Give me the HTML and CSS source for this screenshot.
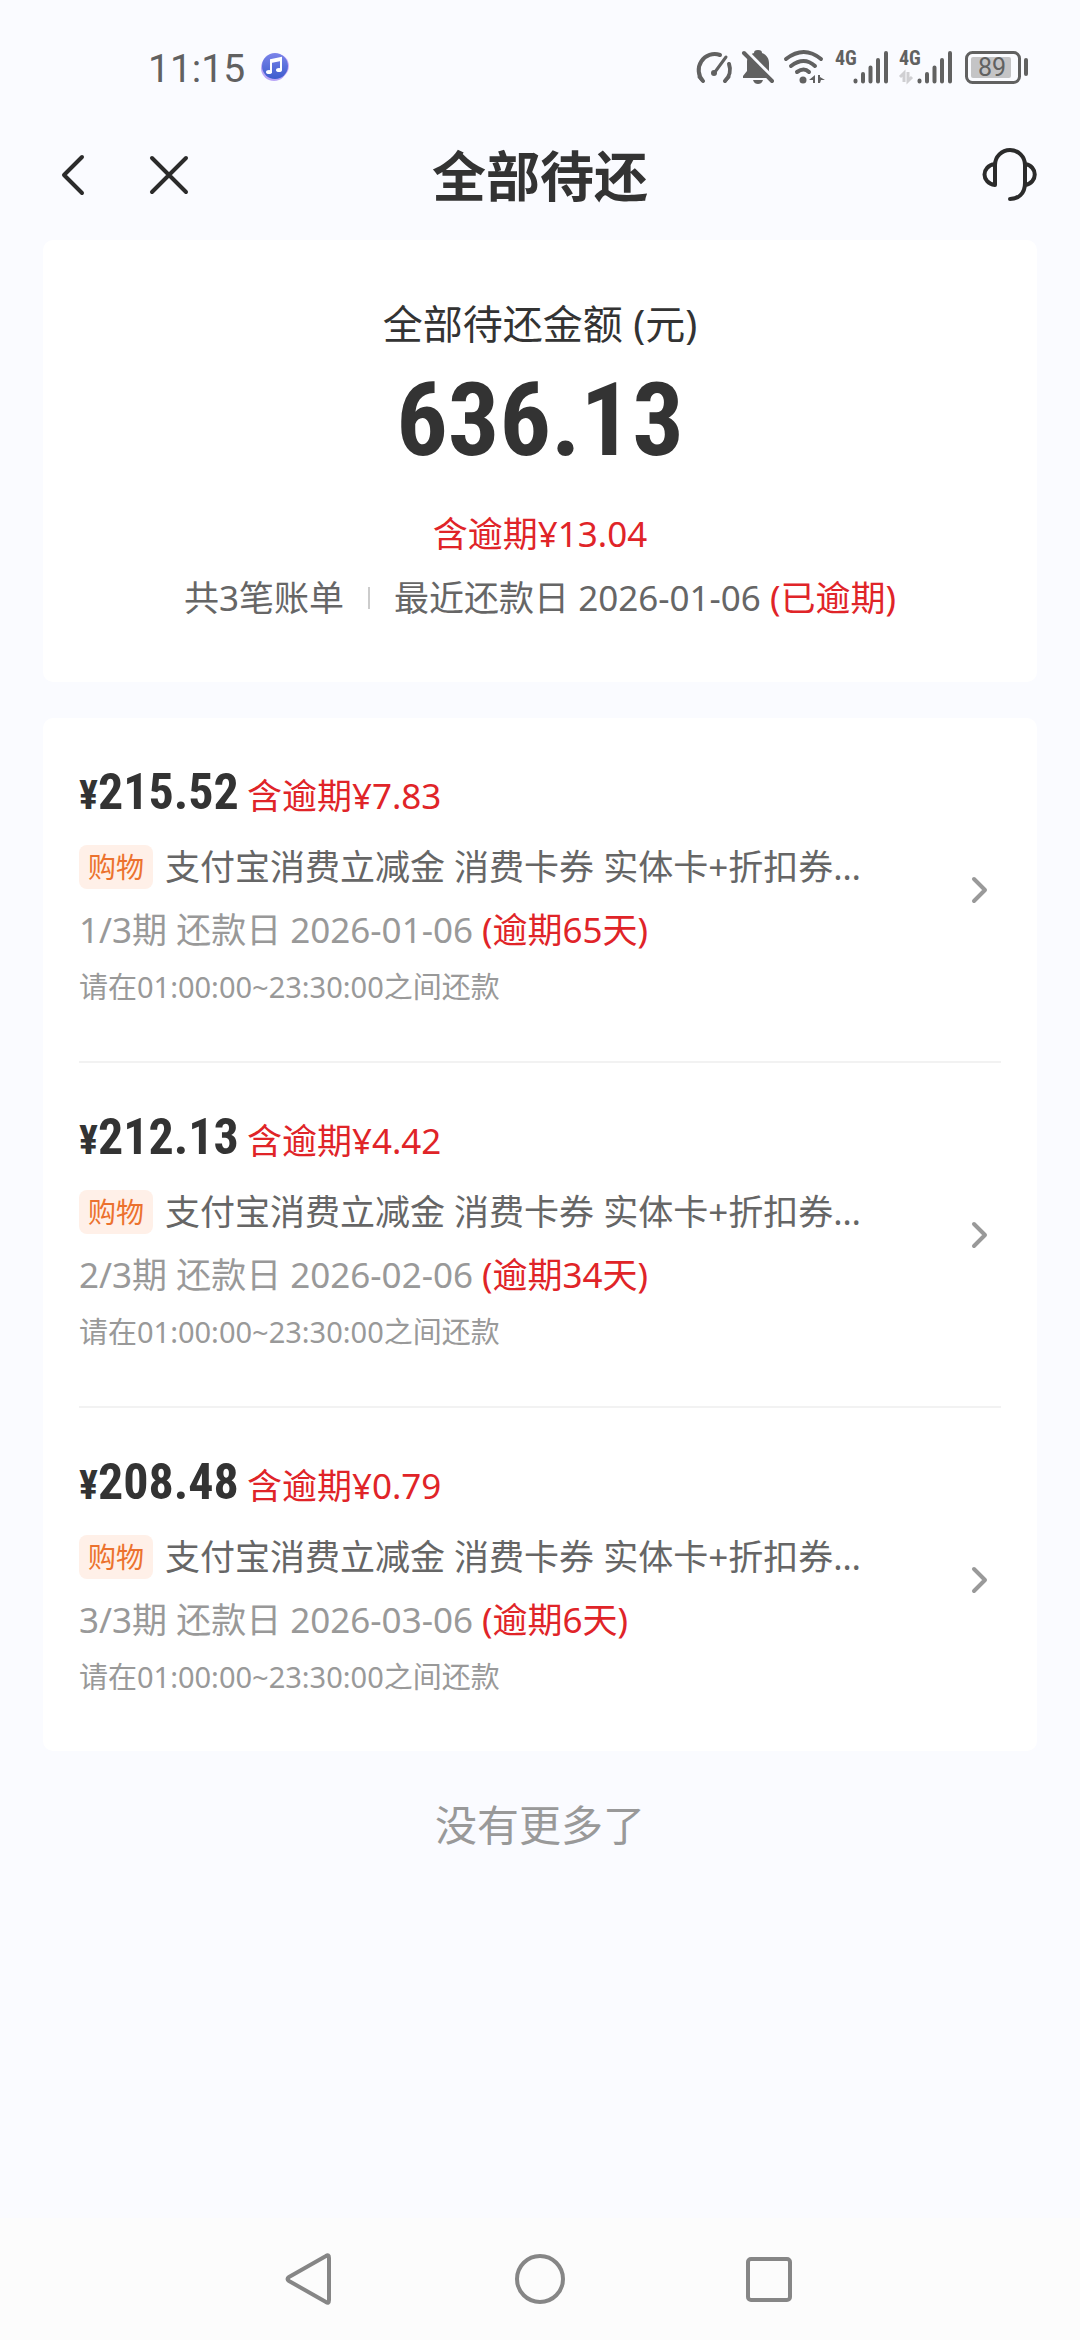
FILE: index.html
```html
<!DOCTYPE html>
<html lang="zh-CN">
<head>
<meta charset="utf-8">
<meta name="viewport" content="width=device-width, initial-scale=1">
<title>全部待还</title>
<link rel="stylesheet" href="styles.css">
</head>
<body>
<div class="status-bar">
  <span class="clock">11:15</span>
  <svg class="music" width="30" height="30" viewBox="0 0 30 30" aria-hidden="true">
    <defs><linearGradient id="note" x1="0" y1="0" x2="0" y2="1"><stop offset="0" stop-color="#7b84ea"/><stop offset="1" stop-color="#3d5ccd"/></linearGradient></defs>
    <circle cx="14" cy="16" r="13" fill="#b9a5f7"/><circle cx="17" cy="14" r="12" fill="#d0b0f8"/>
    <circle cx="15" cy="14" r="13" fill="url(#note)"/>
    <path d="M11 21V8l10-2v12" fill="none" stroke="#fff" stroke-width="2"/><path d="M11 8l10-2v3l-10 2z" fill="#fff"/>
    <ellipse cx="9" cy="20" rx="3" ry="2" fill="#fff"/><ellipse cx="19" cy="18" rx="3" ry="2" fill="#fff"/>
  </svg>
  <div class="status-icons">
    <svg width="36" height="34" viewBox="0 0 36 34" fill="none" stroke="#616161" stroke-width="4" stroke-linecap="round" aria-hidden="true">
      <path d="M7 31A16 16 0 0 1 24 5"/><path d="M3 27l4 4M29 31l4-4" stroke-width="3"/><path d="M33 14A16 16 0 0 1 29 31"/>
      <path d="M30 7L19 22" stroke-width="3"/><circle cx="18" cy="23" r="3" fill="#616161" stroke="none"/>
    </svg>
    <svg width="32" height="34" viewBox="0 0 32 34" aria-hidden="true">
      <path d="M16 0c3 0 4 1 4 3 5 2 7 6 7 10v8l2 5v2H1v-2l4-5v-9c0-5 3-8 7-9 0-2 1-3 4-3z" fill="#616161"/>
      <path d="M11 30h10c-1 3-3 4-5 4s-4-1-5-4z" fill="#616161"/>
      <path d="M2 -1L33 30" stroke="#fafbff" stroke-width="4"/>
      <path d="M2 3l28 28" stroke="#616161" stroke-width="4" stroke-linecap="round"/>
    </svg>
    <svg width="41" height="34" viewBox="0 0 41 34" fill="none" stroke="#616161" stroke-width="4" stroke-linecap="round" aria-hidden="true">
      <path d="M2 9Q20 -5 37 9M7 16Q20 6 31 16M13 22Q20 17 25 22"/><circle cx="19" cy="30" r="3.500" fill="#616161" stroke="none"/>
      <path d="M31 25v8h-2v-3h-4zM34 25h2v2l5 3h-4l-1 3h-2z" fill="#616161" stroke="none"/>
    </svg>
    <svg class="signal" width="54" height="34" viewBox="0 0 54 34" aria-hidden="true">
      <text x="0" y="15" class="net">4G</text>
      <path d="M20.500 30.500v1M28 24v7.500M35.500 17.500v14M43 10v21.500M51 3v28.500" stroke="#616161" stroke-width="4" stroke-linecap="round"/>
    </svg>
    <svg class="signal" width="54" height="34" viewBox="0 0 54 34" aria-hidden="true">
      <text x="0" y="15" class="net">4G</text>
      <path d="M1 27l4-4v9M9 22v9l4-4" fill="none" stroke="#cfcfd2" stroke-width="3"/>
      <path d="M20.500 30.500v1M28 24v7.500M35.500 17.500v14M43 10v21.500M51 3v28.500" stroke="#616161" stroke-width="4" stroke-linecap="round"/>
    </svg>
    <svg class="battery" width="64" height="34" viewBox="0 0 64 34" aria-hidden="true">
      <rect x="1.500" y="2.500" width="53" height="30" rx="6" fill="none" stroke="#616161" stroke-width="3"/>
      <rect x="6" y="7" width="40" height="21" rx="2" fill="#c4c4c6"/><rect x="59" y="8" width="4" height="18" rx="2" fill="#616161"/>
      <text x="27" y="26" class="charge">89</text>
    </svg>
  </div>
</div>
<header class="header">
  <div class="header-left">
    <button class="icon-button" aria-label="返回"><svg width="26" height="42" viewBox="0 0 26 42"><path d="M23 2L5 20l18 18"/></svg></button>
    <button class="icon-button" aria-label="关闭"><svg width="38" height="38" viewBox="0 0 38 38"><path d="M2 1l34 34M36 1L2 35"/></svg></button>
  </div>
  <h1 class="title">全部待还</h1>
  <button class="icon-button service" aria-label="客服"><svg width="56" height="56" viewBox="0 0 56 56"><path d="M14 37V17a15 15 0 0 1 30 0v18c0 11-7 16-15 16M14 16c-14 2-14 19 0 21M44 16c13 2 13 19 0 21"/></svg></button>
</header>
<main class="content">
  <section class="card summary">
    <h2 class="summary-label">全部待还金额 (元)</h2>
    <p class="total">636.13</p>
    <p class="summary-line overdue">含逾期¥13.04</p>
    <p class="summary-line"><span>共3笔账单</span><span class="separator"></span><span>最近还款日 2026-01-06 <span class="overdue">(已逾期)</span></span></p>
  </section>
  <section class="card bills">
    <a class="bill" href="#bill-1">
      <div class="bill-main">
        <p class="amount"><span class="price"><span class="yen">¥</span>215.52</span><span class="overdue">含逾期¥7.83</span></p>
        <p class="goods"><span class="tag">购物</span><span class="name">支付宝消费立减金 消费卡券 实体卡+折扣券…</span></p>
        <p class="due">1/3期 还款日 2026-01-06 <span class="overdue">(逾期65天)</span></p>
        <p class="hint">请在01:00:00~23:30:00之间还款</p>
      </div>
      <svg class="chevron" width="18" height="28" viewBox="0 0 18 28"><path d="M3 3l11 11L3 25"/></svg>
    </a>
    <a class="bill" href="#bill-2">
      <div class="bill-main">
        <p class="amount"><span class="price"><span class="yen">¥</span>212.13</span><span class="overdue">含逾期¥4.42</span></p>
        <p class="goods"><span class="tag">购物</span><span class="name">支付宝消费立减金 消费卡券 实体卡+折扣券…</span></p>
        <p class="due">2/3期 还款日 2026-02-06 <span class="overdue">(逾期34天)</span></p>
        <p class="hint">请在01:00:00~23:30:00之间还款</p>
      </div>
      <svg class="chevron" width="18" height="28" viewBox="0 0 18 28"><path d="M3 3l11 11L3 25"/></svg>
    </a>
    <a class="bill" href="#bill-3">
      <div class="bill-main">
        <p class="amount"><span class="price"><span class="yen">¥</span>208.48</span><span class="overdue">含逾期¥0.79</span></p>
        <p class="goods"><span class="tag">购物</span><span class="name">支付宝消费立减金 消费卡券 实体卡+折扣券…</span></p>
        <p class="due">3/3期 还款日 2026-03-06 <span class="overdue">(逾期6天)</span></p>
        <p class="hint">请在01:00:00~23:30:00之间还款</p>
      </div>
      <svg class="chevron" width="18" height="28" viewBox="0 0 18 28"><path d="M3 3l11 11L3 25"/></svg>
    </a>
  </section>
  <p class="end">没有更多了</p>
</main>
<nav class="system-nav">
  <button class="icon-button" aria-label="后退"><svg width="52" height="52" viewBox="0 0 52 52"><path d="M41 3q3-2 3 2v42q0 4-3 2L4 28q-3-2 0-4z"/></svg></button>
  <button class="icon-button" aria-label="主屏幕"><svg width="52" height="52" viewBox="0 0 52 52"><circle cx="26" cy="26" r="23"/></svg></button>
  <button class="icon-button" aria-label="最近任务"><svg width="52" height="52" viewBox="0 0 52 52"><rect x="5" y="6" width="42" height="41" rx="3"/></svg></button>
</nav>
</body>
</html>
```
FILE: styles.css
```css
* { box-sizing: border-box; }
body {
  margin: 0;
  min-height: 100vh;
  display: flex;
  flex-direction: column;
  background: #fafbff;
  color: #333;
  font-family: "Noto Sans", "Noto Sans CJK SC", sans-serif;
  font-size: 35px;
}
h1, h2, p { margin: 0; font-weight: 400; }
svg { display: block; flex: none; overflow: visible; }
.status-bar {
  display: flex;
  align-items: center;
  gap: 15px;
  height: 112px;
  padding: 22px 51px 0 148px;
  color: #616161;
}
.clock { padding-top: 4px; font: 39px/40px Roboto, sans-serif; }
.status-icons { display: flex; align-items: center; gap: 10px; margin-left: auto; }
.battery { margin-left: 2px; }
.net { font: 700 20px "Roboto Condensed", Roboto, sans-serif; fill: #616161; }
.charge { font: 25px Roboto, sans-serif; fill: #616161; text-anchor: middle; }
.header {
  display: grid;
  grid-template-columns: 1fr auto 1fr;
  align-items: center;
  height: 128px;
  padding: 0 43px;
}
.header-left { display: flex; align-items: center; gap: 65px; padding-left: 16px; }
.icon-button {
  padding: 0;
  border: 0;
  background: none;
  fill: none;
  stroke: #2b2b2b;
  stroke-width: 4px;
  stroke-linecap: round;
  stroke-linejoin: round;
}
.service { justify-self: end; }
.title { font-size: 54px; line-height: 72px; font-weight: 700; }
.content { padding: 0 43px; }
.card { background: #fff; border-radius: 10px; }
.summary {
  display: flex;
  flex-direction: column;
  align-items: center;
  padding: 56px 36px 52px;
}
.summary-label { font-size: 40px; line-height: 56px; }
.total, .price { font-family: "Roboto Condensed", Roboto, sans-serif; font-weight: 700; }
.total { margin: 8px 0 22px; font-size: 102px; line-height: 120px; }
.summary-line { display: flex; align-items: center; line-height: 64px; color: #666; }
.separator { width: 2px; height: 22px; margin: 0 24px; background: #ccc; }
.summary-line.overdue, .overdue { color: #e02428; }
.bills { margin-top: 36px; padding: 0 36px; }
.bill {
  display: flex;
  align-items: center;
  justify-content: space-between;
  padding-right: 12px;
  color: inherit;
  text-decoration: none;
}
.bill:not(:last-child) { border-bottom: 2px solid #f2f2f2; }
.bill-main { min-width: 0; padding: 38px 0 47px; }
.amount { display: flex; align-items: baseline; gap: 8px; height: 72px; margin-bottom: 6px; line-height: 72px; }
.price { font-size: 50px; }
.yen { font-size: 40px; }
.goods { display: flex; align-items: center; gap: 12px; height: 66px; line-height: 66px; color: #666; }
.tag {
  padding: 0 9px;
  border-radius: 8px;
  background: #fff0e8;
  color: #ec722e;
  font-size: 28px;
  line-height: 44px;
}
.name { overflow: hidden; white-space: nowrap; text-overflow: ellipsis; }
.due { height: 60px; line-height: 60px; color: #999; }
.hint { height: 54px; font-size: 29px; line-height: 54px; color: #999; }
.chevron { fill: none; stroke: #999; stroke-width: 4px; stroke-linecap: round; stroke-linejoin: round; }
.end { margin: 44px 0; text-align: center; font-size: 42px; line-height: 60px; color: #999; }
.system-nav {
  display: flex;
  justify-content: center;
  align-items: center;
  gap: 177px;
  height: 122px;
  margin-top: auto;
  background: #fcfcfc;
}
.system-nav .icon-button { stroke: #868686; }
```
